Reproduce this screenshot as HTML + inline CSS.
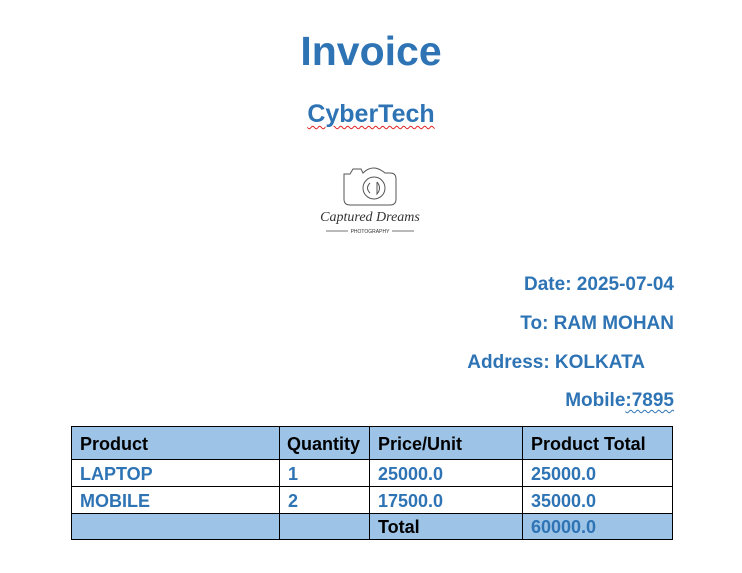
<!DOCTYPE html>
<html><head><style>
body{margin:0;width:742px;height:573px;background:#fff;font-family:"Liberation Sans",sans-serif;position:relative;overflow:hidden}
.b{position:absolute;color:#2e74b5;font-weight:bold;white-space:nowrap}
table{position:absolute;left:71px;top:426px;border-collapse:collapse;font-weight:bold;font-size:18px;table-layout:fixed;width:601px}
td{border:1px solid #000;padding:2px 0 0 8px;color:#2e74b5;white-space:nowrap;overflow:hidden}
tr.h td{background:#9dc3e6;color:#000}
</style></head><body>
<div class="b" style="left:0;width:742px;text-align:center;top:28px;font-size:41px">Invoice</div>
<div class="b" style="left:0;width:742px;text-align:center;top:100px;font-size:25px"><span style="text-decoration:underline wavy #e02020;text-decoration-thickness:1px;text-underline-offset:3px">CyberTech</span></div>
<svg style="position:absolute;left:318px;top:160px" width="104" height="80" viewBox="0 0 104 80">
<g fill="none" stroke="#555" stroke-width="1">
<path d="M26 14 h6 l3-5 h8 l2 4 q10-10 22 0 h5 q6 0 6 6 v20 q0 6-6 6 h-40 q-6 0-6-6 z"/>
<circle cx="56" cy="28" r="11"/>
<path d="M52 23 q-5 5 0 10 M59 22 v12 q5-6 0-12"/>
</g>
<text x="52" y="61" text-anchor="middle" font-family="Liberation Serif,serif" font-style="italic" font-size="14" fill="#333">Captured Dreams</text>
<line x1="8" y1="71" x2="30" y2="71" stroke="#444" stroke-width="0.8"/>
<line x1="74" y1="71" x2="96" y2="71" stroke="#444" stroke-width="0.8"/>
<text x="52" y="73" text-anchor="middle" font-size="5" fill="#333">PHOTOGRAPHY</text>
</svg>
<div class="b" style="right:68px;top:274px;font-size:19px">Date: 2025-07-04</div>
<div class="b" style="right:68px;top:313px;font-size:19px">To: RAM MOHAN</div>
<div class="b" style="right:97px;top:352px;font-size:19px">Address: KOLKATA</div>
<div class="b" style="right:68px;top:390px;font-size:19px">Mobile<span style="text-decoration:underline wavy #2e74b5;text-decoration-thickness:1px;text-underline-offset:3px">:7895</span></div>
<table>
<colgroup><col style="width:208px"><col style="width:90px"><col style="width:153px"><col style="width:150px"></colgroup>
<tr class="h" style="height:33px"><td>Product</td><td style="padding-left:7px">Quantity</td><td>Price/Unit</td><td>Product Total</td></tr>
<tr style="height:27px"><td>LAPTOP</td><td>1</td><td>25000.0</td><td>25000.0</td></tr>
<tr style="height:27px"><td>MOBILE</td><td>2</td><td>17500.0</td><td>35000.0</td></tr>
<tr class="h" style="height:26px"><td></td><td></td><td>Total</td><td style="color:#2e74b5">60000.0</td></tr>
</table>
</body></html>
